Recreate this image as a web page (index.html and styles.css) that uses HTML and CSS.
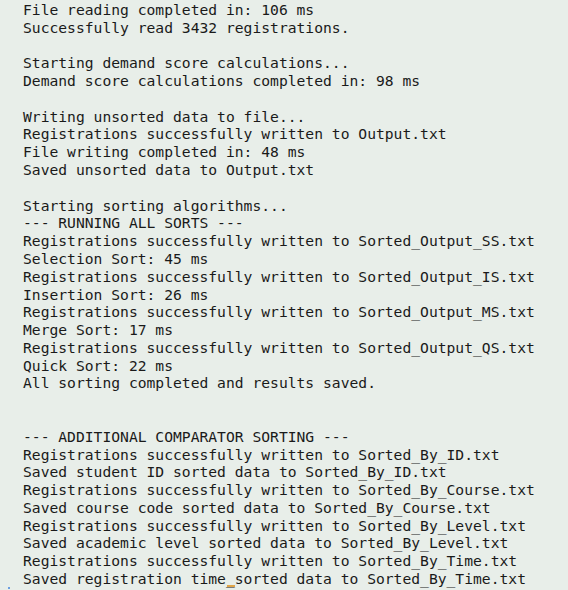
FILE: index.html
```html
<!DOCTYPE html>
<html>
<head>
<meta charset="utf-8">
<link rel="stylesheet" href="styles.css">
</head>
<body>
<main class="console">
<pre class="log">File reading completed in: 106 ms
Successfully read 3432 registrations.

Starting demand score calculations...
Demand score calculations completed in: 98 ms

Writing unsorted data to file...
Registrations successfully written to Output.txt
File writing completed in: 48 ms
Saved unsorted data to Output.txt

Starting sorting algorithms...
--- RUNNING ALL SORTS ---
Registrations successfully written to Sorted_Output_SS.txt
Selection Sort: 45 ms
Registrations successfully written to Sorted_Output_IS.txt
Insertion Sort: 26 ms
Registrations successfully written to Sorted_Output_MS.txt
Merge Sort: 17 ms
Registrations successfully written to Sorted_Output_QS.txt
Quick Sort: 22 ms
All sorting completed and results saved.


--- ADDITIONAL COMPARATOR SORTING ---
Registrations successfully written to Sorted_By_ID.txt
Saved student ID sorted data to Sorted_By_ID.txt
Registrations successfully written to Sorted_By_Course.txt
Saved course code sorted data to Sorted_By_Course.txt
Registrations successfully written to Sorted_By_Level.txt
Saved academic level sorted data to Sorted_By_Level.txt
Registrations successfully written to Sorted_By_Time.txt
Saved registration time_sorted data to Sorted_By_Time.txt</pre>
<span class="cursor"></span>
<span class="dot"></span>
</main>
</body>
</html>
```
FILE: styles.css
```css
html, body {
  margin: 0;
  padding: 0;
  background: #e8eee9;
  overflow: hidden;
}
.console {
  position: relative;
  width: 568px;
  height: 590px;
}
.log {
  margin: 0;
  padding: 1px 0 0 23px;
  font-family: "DejaVu Sans Mono", monospace;
  font-size: 14.67px;
  line-height: 17.78px;
  color: #1a1a1a;
}
.cursor {
  position: absolute;
  left: 227px;
  top: 585px;
  width: 8px;
  height: 2px;
  background: #e0a64a;
}
.dot {
  position: absolute;
  left: 8px;
  top: 587px;
  width: 2px;
  height: 2px;
  background: #6b9ee0;
}
```
